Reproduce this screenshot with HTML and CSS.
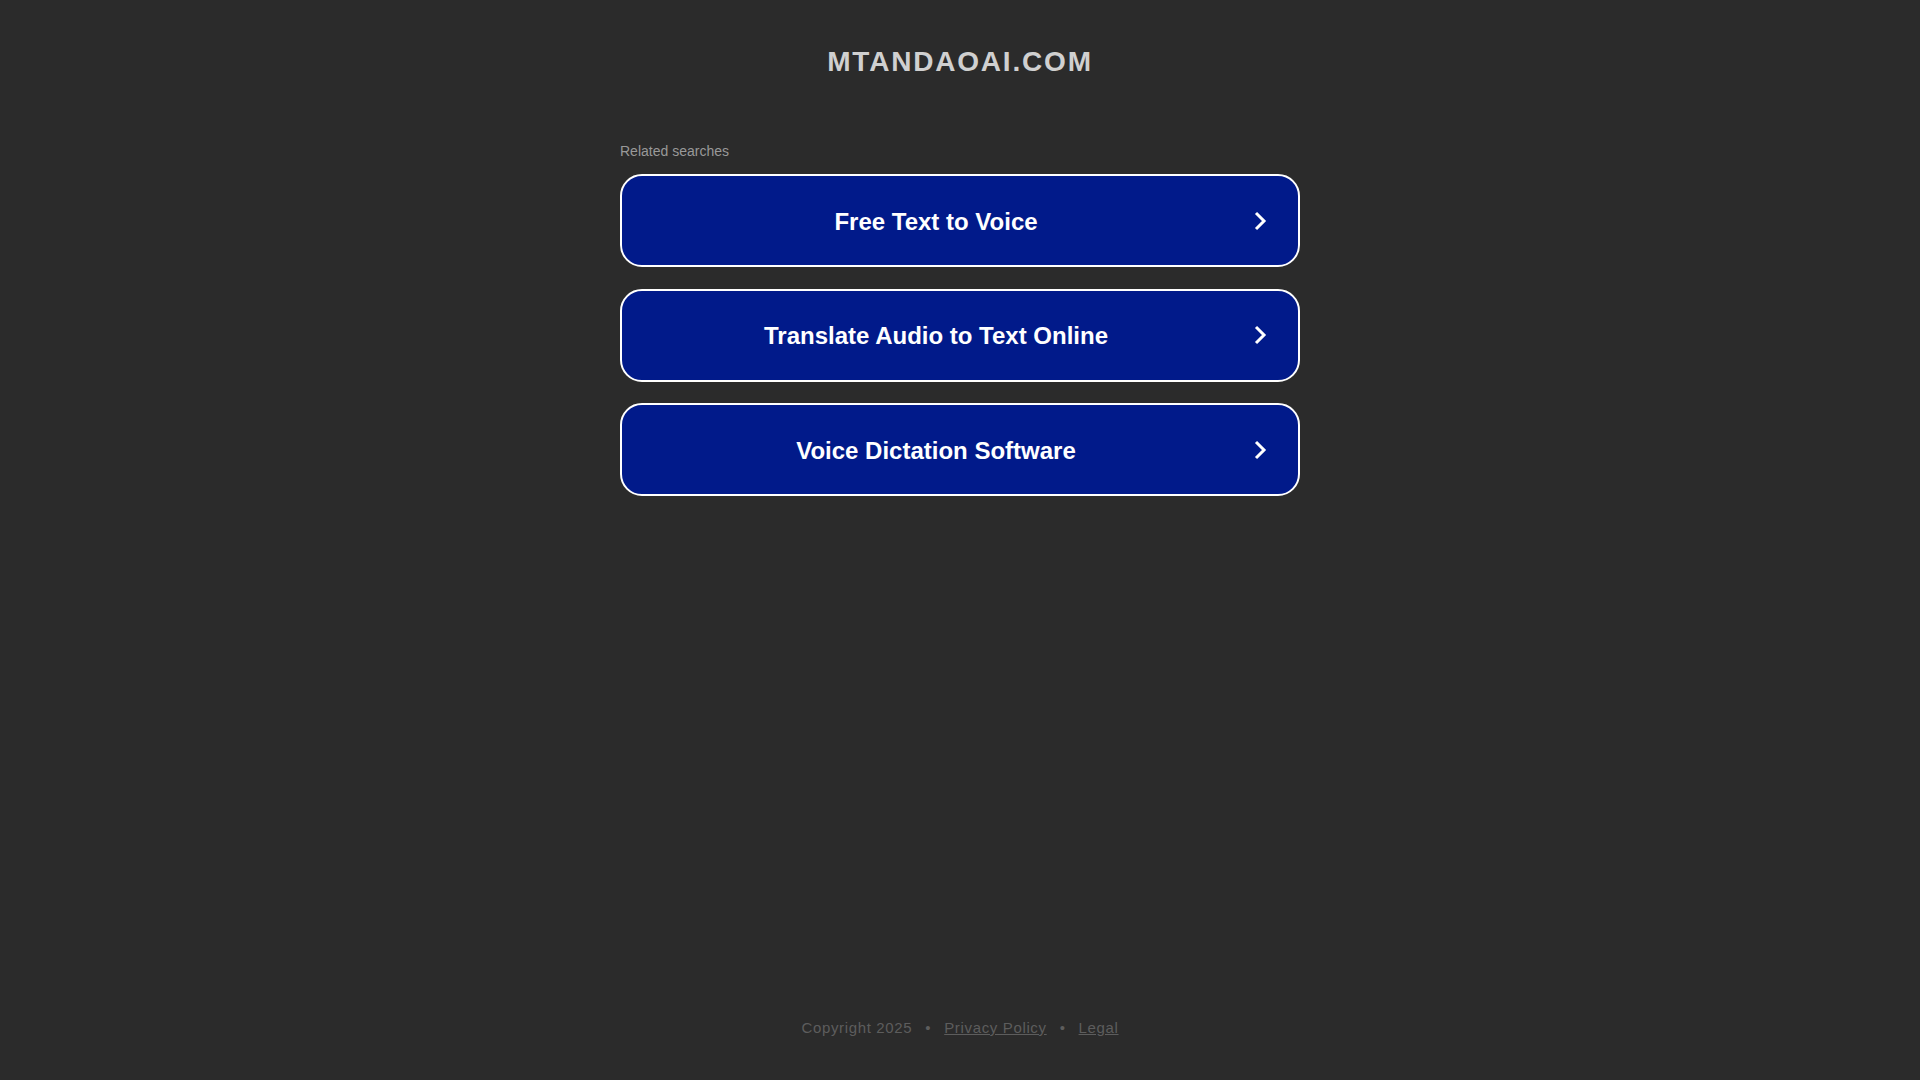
FILE: index.html
```html
<!DOCTYPE html>
<html lang="en">
<head>
<meta charset="utf-8">
<title>mtandaoai.com</title>
<link rel="stylesheet" href="styles.css">
</head>
<body>
<div class="page">
  <header class="header">
    <h1 class="domain">MTANDAOAI.COM</h1>
  </header>
  <main class="content">
    <p class="related">Related searches</p>
    <ul class="links">
      <li><a class="link" href="#"><span class="link-text">Free Text to Voice</span><svg class="chev" width="14" height="20" viewBox="0 0 14 20"><polyline points="3,2 11,10 3,18" fill="none" stroke="#fff" stroke-width="3"/></svg></a></li>
      <li><a class="link" href="#"><span class="link-text">Translate Audio to Text Online</span><svg class="chev" width="14" height="20" viewBox="0 0 14 20"><polyline points="3,2 11,10 3,18" fill="none" stroke="#fff" stroke-width="3"/></svg></a></li>
      <li><a class="link" href="#"><span class="link-text">Voice Dictation Software</span><svg class="chev" width="14" height="20" viewBox="0 0 14 20"><polyline points="3,2 11,10 3,18" fill="none" stroke="#fff" stroke-width="3"/></svg></a></li>
    </ul>
  </main>
  <footer class="footer">
    <span>Copyright 2025</span>
    <span class="dot">•</span>
    <a class="foot-link" href="#">Privacy Policy</a>
    <span class="dot">•</span>
    <a class="foot-link" href="#">Legal</a>
  </footer>
</div>
</body>
</html>
```

FILE: styles.css
```css
html, body {
  margin: 0;
  padding: 0;
  background: #2b2b2b;
  font-family: "Liberation Sans", Arial, sans-serif;
}

.page {
  min-height: 100vh;
  display: flex;
  flex-direction: column;
  align-items: center;
}

.header {
  padding-top: 46px;
}

.domain {
  margin: 0;
  font-size: 28px;
  line-height: 32px;
  font-weight: 700;
  letter-spacing: 1.8px;
  color: #d0d0d0;
  text-align: center;
}

.content {
  width: 680px;
  margin-top: 65px;
}

.related {
  margin: 0 0 15px 0;
  font-size: 14px;
  line-height: 16px;
  color: #999999;
}

.links {
  list-style: none;
  margin: 0;
  padding: 0;
  display: flex;
  flex-direction: column;
  gap: 21.5px;
}

.link {
  box-sizing: border-box;
  height: 93px;
  display: flex;
  align-items: center;
  padding: 0 31px 0 0;
  background: #011a8a;
  border: 2px solid #ffffff;
  border-radius: 22px;
  color: #ffffff;
  text-decoration: none;
}

.link-text {
  flex: 1;
  text-align: center;
  font-size: 24px;
  font-weight: 700;
  line-height: 28px;
  padding-top: 2px;
}

.chev {
  display: block;
  margin-left: 3px;
}

.footer {
  margin-top: auto;
  padding-bottom: 44px;
  display: flex;
  gap: 13px;
  font-size: 15px;
  line-height: 17px;
  letter-spacing: 0.65px;
  color: #5d5d5d;
}

.foot-link {
  color: #5d5d5d;
  text-decoration: underline;
}
```
